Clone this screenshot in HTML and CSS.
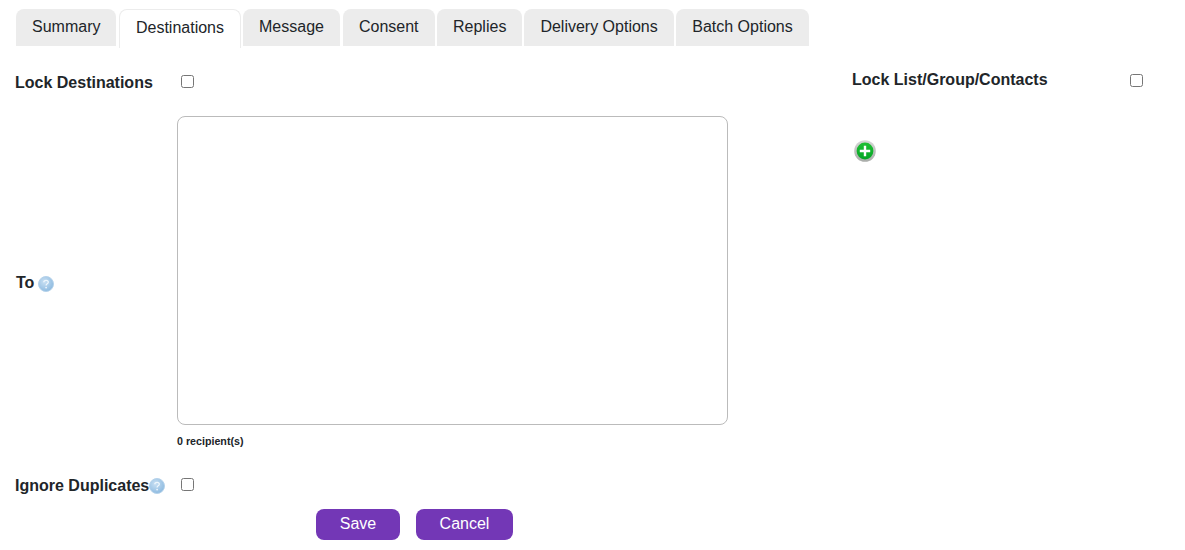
FILE: index.html
```html
<!DOCTYPE html>
<html lang="en">
<head>
<meta charset="utf-8">
<title>Destinations</title>
<link rel="stylesheet" href="styles.css">
</head>
<body>
<nav class="tabs">
  <a class="tab">Summary</a>
  <a class="tab active">Destinations</a>
  <a class="tab message">Message</a>
  <a class="tab">Consent</a>
  <a class="tab replies">Replies</a>
  <a class="tab">Delivery Options</a>
  <a class="tab">Batch Options</a>
</nav>
<main class="content">
  <section class="left">
    <div class="row lock-row">
      <label class="label">Lock Destinations</label>
      <input class="check" type="checkbox">
    </div>
    <div class="row to-row">
      <label class="label">To <svg class="help" viewBox="0 0 16 16"><defs><radialGradient id="h1" cx="40%" cy="35%" r="70%"><stop offset="0" stop-color="#c9e0f3"/><stop offset="1" stop-color="#8ab8df"/></radialGradient></defs><circle cx="8" cy="8" r="7.5" fill="url(#h1)" stroke="#b5d2ea"/><path d="M5.8 6.3c0-1.3 1-2 2.3-2s2.2.8 2.2 1.9c0 1.6-2.2 1.6-2.2 3.3" fill="none" stroke="#eef6fc" stroke-width="1.3"/><circle cx="8.1" cy="11.6" r=".9" fill="#eef6fc"/></svg></label>
      <div class="to-field">
        <textarea class="area"></textarea>
        <div class="count">0 recipient(s)</div>
      </div>
    </div>
    <div class="row ignore-row">
      <label class="label">Ignore Duplicates<svg class="help tight" viewBox="0 0 16 16"><defs><radialGradient id="h2" cx="40%" cy="35%" r="70%"><stop offset="0" stop-color="#c9e0f3"/><stop offset="1" stop-color="#8ab8df"/></radialGradient></defs><circle cx="8" cy="8" r="7.5" fill="url(#h2)" stroke="#b5d2ea"/><path d="M5.8 6.3c0-1.3 1-2 2.3-2s2.2.8 2.2 1.9c0 1.6-2.2 1.6-2.2 3.3" fill="none" stroke="#eef6fc" stroke-width="1.3"/><circle cx="8.1" cy="11.6" r=".9" fill="#eef6fc"/></svg></label>
      <input class="check" type="checkbox">
    </div>
    <div class="actions">
      <button class="btn save">Save</button>
      <button class="btn cancel">Cancel</button>
    </div>
  </section>
  <aside class="right">
    <div class="right-head">
      <label class="label wide">Lock List/Group/Contacts</label>
      <input class="check" type="checkbox">
    </div>
    <svg class="add" viewBox="0 0 22 22"><defs><linearGradient id="g" x1="0" y1="0" x2="0" y2="1"><stop offset="0" stop-color="#1fc034"/><stop offset="1" stop-color="#05a526"/></linearGradient><linearGradient id="r" x1="0" y1="0" x2="0" y2="1"><stop offset="0" stop-color="#d6d8d6"/><stop offset="1" stop-color="#a9aca9"/></linearGradient></defs><circle cx="11" cy="11" r="10.8" fill="url(#r)"/><circle cx="11" cy="11" r="8.4" fill="url(#g)"/><path d="M11 5.8v10.4M5.8 11h10.4" stroke="#fff" stroke-width="2.4"/></svg>
  </aside>
</main>
</body>
</html>
```
FILE: styles.css
```css
* { box-sizing: border-box; }
html, body { margin: 0; padding: 0; }
body {
  width: 1185px;
  height: 550px;
  overflow: hidden;
  background: #fff;
  color: #212529;
  font-family: "Liberation Sans", Arial, sans-serif;
  font-size: 16px;
}
.tabs {
  display: flex;
  align-items: flex-start;
  gap: 2.5px;
  padding: 9px 0 0 16px;
  height: 48px;
}
.tab {
  display: block;
  height: 37px;
  padding: 9px 16px 0;
  line-height: 18px;
  background: #ececec;
  border-radius: 8px 8px 0 0;
}
.active {
  height: 39px;
  padding: 9px 16px 0;
  background: #fff;
  border: 1px solid #ececec;
  border-bottom: 0;
  margin: 0 -0.5px 0 0;
}
.message { margin-right: 0.5px; }
.replies { margin-right: -0.5px; }
.content { display: flex; }
.left { width: 852px; padding-left: 15px; }
.right { padding-top: 23px; }
.row { display: flex; }
.label {
  display: flex;
  align-items: center;
  width: 162px;
  flex: none;
  font-weight: 700;
  line-height: 18px;
}
.check {
  width: 13px;
  height: 13px;
  margin: 0 0 0 4px;
  flex: none;
}
.lock-row { align-items: center; height: 22px; margin-top: 23px; }
.lock-row .label { padding-top: 2px; }
.lock-row .check { margin-bottom: 2px; }
.to-row { align-items: center; margin-top: 23px; }
.to-row .label { margin-top: 1px; padding-left: 1px; }
.help { width: 16px; height: 16px; margin: 2px 0 0 4px; flex: none; }
.help.tight { margin: 0; }
.to-field { display: flex; flex-direction: column; }
.area {
  display: block;
  width: 551px;
  height: 309px;
  margin: 0;
  border: 1px solid #bbb;
  border-radius: 8px;
  background: #fff;
  resize: none;
}
.count { margin-top: 10px; font-size: 10.7px; font-weight: 700; line-height: 13px; }
.ignore-row { align-items: center; height: 20px; margin-top: 27px; }
.ignore-row .label { padding-top: 2px; }
.ignore-row .check { margin-bottom: 2px; }
.actions { display: flex; gap: 16px; margin-top: 14px; padding-left: 301px; }
.btn {
  height: 31px;
  padding: 0 0 2px;
  border: 0;
  border-radius: 8px;
  background: #7337b6;
  color: #fff;
  font-family: inherit;
  font-size: 16px;
}
.save { width: 84px; }
.cancel { width: 97px; }
.right-head { display: flex; align-items: center; height: 18px; }
.right-head .check { margin: 1px 0 0 0; }
.wide { width: 278px; }
.add { display: block; width: 22px; height: 22px; margin: 51px 0 0 2px; }
```
